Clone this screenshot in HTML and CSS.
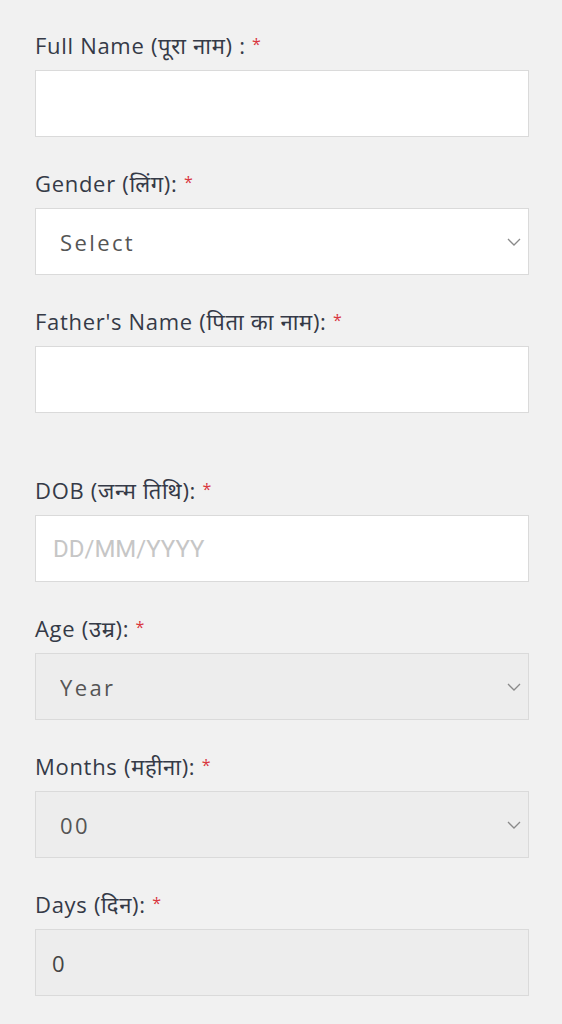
FILE: index.html
```html
<!DOCTYPE html>
<html lang="hi">
<head>
    <meta charset="UTF-8" />
    <meta name="viewport" content="width=device-width, initial-scale=1.0"/>
    <title>Form</title>
    <link rel="stylesheet" href="styles.css">
</head>
<body>
    <!-- ===== FORM ===== -->
    <form class="form">
        <div class="field">
            <label class="label">Full Name (पूरा नाम) : <span class="req">*</span></label>
            <input class="input" type="text">
        </div>

        <div class="field">
            <label class="label">Gender (लिंग): <span class="req">*</span></label>
            <div class="select-wrap">
                <select class="input select">
                    <option>Select</option>
                    <option>Male</option>
                    <option>Female</option>
                </select>
                <svg class="chevron" width="14" height="8" viewBox="0 0 14 8"><path d="M1 1l6 6 6-6" fill="none" stroke="#8a8a8a" stroke-width="1.3"/></svg>
            </div>
        </div>

        <div class="field field-gap">
            <label class="label">Father's Name (पिता का नाम): <span class="req">*</span></label>
            <input class="input" type="text">
        </div>

        <div class="field">
            <label class="label">DOB (जन्म तिथि): <span class="req">*</span></label>
            <input class="input date" type="text" placeholder="DD/MM/YYYY">
        </div>

        <div class="field">
            <label class="label">Age (उम्र): <span class="req">*</span></label>
            <div class="select-wrap">
                <select class="input select disabled">
                    <option>Year</option>
                </select>
                <svg class="chevron" width="14" height="8" viewBox="0 0 14 8"><path d="M1 1l6 6 6-6" fill="none" stroke="#8a8a8a" stroke-width="1.3"/></svg>
            </div>
        </div>

        <div class="field">
            <label class="label">Months (महीना): <span class="req">*</span></label>
            <div class="select-wrap">
                <select class="input select disabled">
                    <option>00</option>
                </select>
                <svg class="chevron" width="14" height="8" viewBox="0 0 14 8"><path d="M1 1l6 6 6-6" fill="none" stroke="#8a8a8a" stroke-width="1.3"/></svg>
            </div>
        </div>

        <div class="field">
            <label class="label">Days (दिन): <span class="req">*</span></label>
            <input class="input disabled" type="text" value="0" readonly>
        </div>
    </form>
</body>
</html>
```

FILE: styles.css
```css
body{
    margin:0;background:#f1f1f1;
    font-family:"Open Sans","Noto Sans",sans-serif;
}
.form{padding:30px 33px 20px 35px;}
.field{margin-bottom:31px;}
.field-gap{margin-bottom:62px;}
.label{
    display:block;height:30px;font-size:22px;line-height:30px;
    letter-spacing:.7px;color:#353a47;margin-bottom:10px;
    white-space:nowrap;
}
.req{color:#d9363e;font-size:16px;position:relative;top:-4px;}
.input{
    display:block;box-sizing:border-box;width:100%;height:67px;
    margin:0;padding:0 16px;
    border:1px solid #dadada;border-radius:0;background:#fff;
    font-family:"Open Sans","Noto Sans",sans-serif;font-size:22px;color:#444;
    outline:none;
}
.date{font-family:Roboto,sans-serif;font-size:24px;padding-left:17px;}
.date::placeholder{color:#c6c6c6;}
.select{
    -webkit-appearance:none;appearance:none;
    padding-left:24px;letter-spacing:2.4px;color:#555;font-weight:500;
}
.disabled{background:#ededed;}

/* panah dropdown */
.select-wrap{position:relative;}
.chevron{position:absolute;right:8px;top:30px;pointer-events:none;}
```
